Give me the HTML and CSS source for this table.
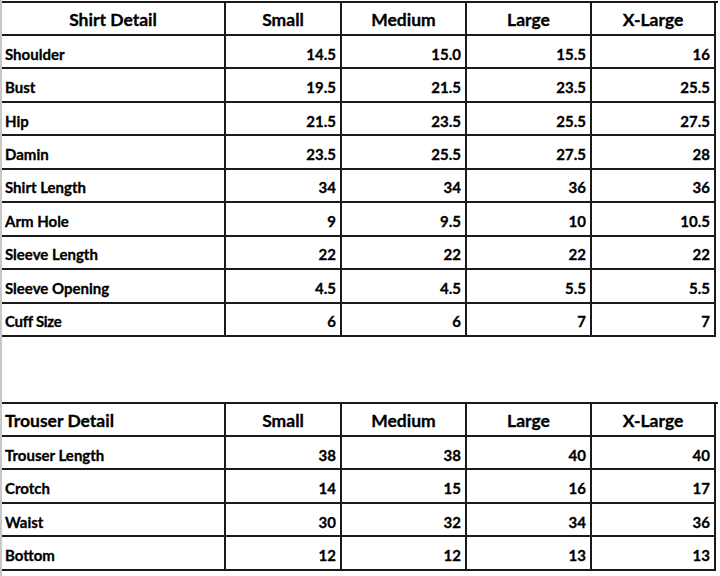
FILE: index.html
```html
<!DOCTYPE html>
<html lang="en">
<head>
<meta charset="utf-8">
<title>Size Chart</title>
<link rel="stylesheet" href="styles.css">
</head>
<body>
<div class="page">
  <div class="sheet shirt">
    <div class="cell head title">Shirt Detail</div>
    <div class="cell head">Small</div>
    <div class="cell head">Medium</div>
    <div class="cell head">Large</div>
    <div class="cell head">X-Large</div>

    <div class="cell label">Shoulder</div><div class="cell num">14.5</div><div class="cell num">15.0</div><div class="cell num">15.5</div><div class="cell num">16</div>
    <div class="cell label">Bust</div><div class="cell num">19.5</div><div class="cell num">21.5</div><div class="cell num">23.5</div><div class="cell num">25.5</div>
    <div class="cell label">Hip</div><div class="cell num">21.5</div><div class="cell num">23.5</div><div class="cell num">25.5</div><div class="cell num">27.5</div>
    <div class="cell label">Damin</div><div class="cell num">23.5</div><div class="cell num">25.5</div><div class="cell num">27.5</div><div class="cell num">28</div>
    <div class="cell label">Shirt Length</div><div class="cell num">34</div><div class="cell num">34</div><div class="cell num">36</div><div class="cell num">36</div>
    <div class="cell label">Arm Hole</div><div class="cell num">9</div><div class="cell num">9.5</div><div class="cell num">10</div><div class="cell num">10.5</div>
    <div class="cell label">Sleeve Length</div><div class="cell num">22</div><div class="cell num">22</div><div class="cell num">22</div><div class="cell num">22</div>
    <div class="cell label">Sleeve Opening</div><div class="cell num">4.5</div><div class="cell num">4.5</div><div class="cell num">5.5</div><div class="cell num">5.5</div>
    <div class="cell label tight">Cuff Size</div><div class="cell num">6</div><div class="cell num">6</div><div class="cell num">7</div><div class="cell num">7</div>
  </div>

  <div class="sheet trouser">
    <div class="cell head title left">Trouser Detail</div>
    <div class="cell head">Small</div>
    <div class="cell head">Medium</div>
    <div class="cell head">Large</div>
    <div class="cell head">X-Large</div>

    <div class="cell label">Trouser Length</div><div class="cell num">38</div><div class="cell num">38</div><div class="cell num">40</div><div class="cell num">40</div>
    <div class="cell label">Crotch</div><div class="cell num">14</div><div class="cell num">15</div><div class="cell num">16</div><div class="cell num">17</div>
    <div class="cell label">Waist</div><div class="cell num">30</div><div class="cell num">32</div><div class="cell num">34</div><div class="cell num">36</div>
    <div class="cell label">Bottom</div><div class="cell num">12</div><div class="cell num">12</div><div class="cell num">13</div><div class="cell num">13</div>
  </div>
</div>
</body>
</html>
```

FILE: styles.css
```css
html, body {
  margin: 0;
  padding: 0;
  background: #ffffff;
}

body {
  font-family: Lato, "Open Sans", "Liberation Sans", sans-serif;
  font-weight: 700;
  color: #000000;
  -webkit-text-stroke: 0.3px #000000;
}

.page {
  width: 718px;
  min-height: 576px;
  box-sizing: border-box;
  border-left: 2px solid #c8c8c8;
  padding-top: 1px;
}

.sheet {
  display: grid;
  grid-template-columns: 224px 116px 125px 125px 124px;
  border-top: 2px solid #1a1a1a;
}

.shirt {
  grid-template-rows: 33px repeat(9, 33.44px);
}

.trouser {
  margin-top: 65px;
  grid-template-rows: 33px repeat(4, 33.5px);
}

.cell {
  box-sizing: border-box;
  border-right: 2px solid #1a1a1a;
  border-bottom: 2px solid #1a1a1a;
  display: flex;
  align-items: center;
  font-size: 15px;
  line-height: 1;
  white-space: nowrap;
  overflow: hidden;
}

.head {
  justify-content: center;
  font-size: 17.5px;
  padding-top: 3px;
}

.head.left {
  justify-content: flex-start;
  padding-left: 3px;
}

.label {
  padding-left: 3px;
  padding-top: 5px;
}

.tight {
  letter-spacing: -0.3px;
}

.num {
  justify-content: flex-end;
  padding-right: 4px;
  padding-top: 5px;
}
```
